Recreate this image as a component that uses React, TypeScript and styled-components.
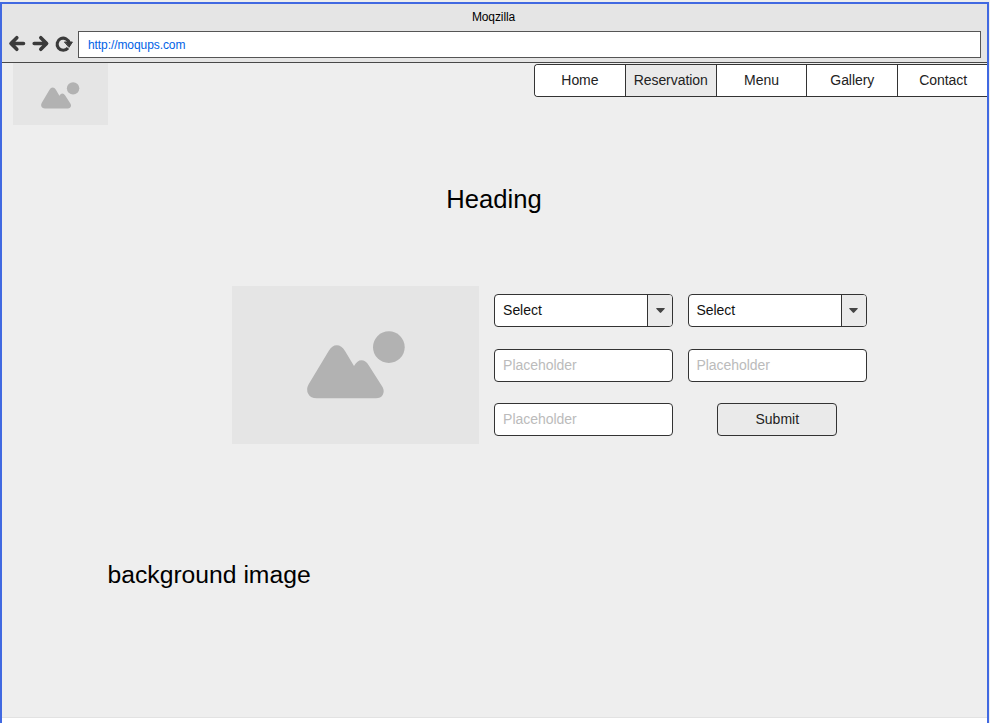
import React from "react";
import styled, { createGlobalStyle } from "styled-components";

const GlobalStyle = createGlobalStyle`
  * { box-sizing: border-box; }
  body {
    margin: 0;
    background: #eeeeee;
    overflow: hidden;
    font-family: "Liberation Sans", Arial, sans-serif;
  }
`;

const ink = "#333333";

const Screen = styled.div`
  width: 990px;
  height: 723px;
  padding: 2px 1px 0 0;
`;

const Window = styled.div`
  height: 721px;
  border: 2px solid #4169e1;
  border-bottom: 0;
  background: #ffffff;
  overflow: hidden;
`;

const Chrome = styled.header`
  height: 59px;
  background: #e5e5e5;
  border-bottom: 1px solid #484848;
`;

const Title = styled.div`
  height: 26px;
  padding-right: 2px;
  line-height: 26px;
  font-size: 12px;
  letter-spacing: -0.1px;
  text-align: center;
  color: #000000;
`;

const AddressRow = styled.div`
  display: flex;
  align-items: center;
  height: 28px;
  padding: 0 6px 0 6px;
`;

const ToolIcons = styled.svg`
  display: block;
  flex: none;
  width: 70px;
  height: 28px;
`;

const Address = styled.div`
  flex: 1;
  height: 27px;
  border: 1px solid #555555;
  background: #ffffff;
  padding-left: 9px;
  line-height: 27px;
  font-size: 12px;
  letter-spacing: -0.08px;
  color: #0062e6;
`;

const Page = styled.main`
  height: 655px;
  background: #eeeeee;
  border-bottom: 1px solid #e2e2e2;
`;

const TopBar = styled.div`
  display: flex;
  justify-content: space-between;
  height: 63px;
  padding-left: 11px;
`;

const Picture = styled.div<{ $w: number; $h: number; $left: number; $top: number }>`
  flex: none;
  width: ${(p) => p.$w}px;
  height: ${(p) => p.$h}px;
  padding: ${(p) => p.$top}px 0 0 ${(p) => p.$left}px;
  background: #e5e5e5;
`;

const PictureSvg = styled.svg`
  display: block;
  overflow: visible;
`;

const Nav = styled.nav`
  display: flex;
  width: 453px;
  height: 33px;
  margin-top: 1px;
  border: 1px solid ${ink};
  border-right: 0;
  border-radius: 4px 0 0 4px;
  background: #ffffff;
  overflow: hidden;
`;

const NavItem = styled.a<{ $active?: boolean }>`
  flex: none;
  width: 90.8px;
  border-right: 1px solid ${ink};
  background: ${(p) => (p.$active ? "#eaeaea" : "#ffffff")};
  line-height: 31px;
  font-size: 14px;
  letter-spacing: -0.06px;
  text-align: center;
  color: #222222;
  &:last-child {
    border-right: 0;
    padding-right: 1px;
  }
`;

const Heading = styled.h1`
  margin: 57px 0 0;
  padding-right: 1px;
  height: 32px;
  line-height: 32px;
  font-size: 25.6px;
  font-weight: 400;
  text-align: center;
  color: #000000;
`;

const Booking = styled.section`
  display: flex;
  gap: 15.4px;
  margin: 71px 0 0 230px;
  height: 158px;
`;

const Form = styled.form`
  display: grid;
  grid-template-columns: 179px 179px;
  grid-auto-rows: 33px;
  column-gap: 14.4px;
  row-gap: 21.5px;
  padding-top: 8px;
`;

const Field = styled.div`
  display: flex;
  border: 1px solid ${ink};
  border-radius: 4px;
  background: #ffffff;
  overflow: hidden;
`;

const FieldText = styled.span<{ $hint?: boolean }>`
  flex: 1;
  padding-left: 7.7px;
  line-height: 31px;
  font-size: 14px;
  letter-spacing: -0.04px;
  color: ${(p) => (p.$hint ? "#bbbbbb" : "#111111")};
`;

const Toggle = styled.span`
  display: flex;
  align-items: center;
  justify-content: center;
  width: 25px;
  border-left: 1px solid ${ink};
  background: #eaeaea;
`;

const Submit = styled.button`
  justify-self: center;
  width: 120px;
  padding: 0;
  border: 1px solid ${ink};
  border-radius: 4px;
  background: #eaeaea;
  font: 14px "Liberation Sans", Arial, sans-serif;
  line-height: 31px;
  color: #222222;
`;

const Caption = styled.p`
  margin: 116px 0 0 105.5px;
  height: 30px;
  line-height: 30px;
  font-size: 24.7px;
  color: #000000;
`;

function Landscape({ width, height }: { width: number; height: number }) {
  return (
    <PictureSvg width={width} height={height} viewBox="0 0 293 202" preserveAspectRatio="none" fill="#b2b2b2">
      <circle cx="245.5" cy="48.5" r="47.5" />
      <path d="M5 160 L65 60 Q75 43 89 43 Q104 43 114 60 L141 105 Q151 88 163 88 Q176 88 185 103 L227 169 Q233 181 227 192 Q221 202 207 202 H29 Q11 202 4 189 Q-4 176 5 160Z" />
    </PictureSvg>
  );
}

function Select() {
  return (
    <Field>
      <FieldText>Select</FieldText>
      <Toggle>
        <svg width="9" height="5" viewBox="0 0 9 5">
          <path d="M.5 0H8.5Q9 .5 8.5 1L5.2 4.6Q4.5 5.2 3.8 4.6L.5 1Q0 .5.5 0Z" fill="#444444" />
        </svg>
      </Toggle>
    </Field>
  );
}

function Placeholder() {
  return (
    <Field>
      <FieldText $hint>Placeholder</FieldText>
    </Field>
  );
}

const links = ["Home", "Reservation", "Menu", "Gallery", "Contact"];

export default function App() {
  return (
    <>
      <GlobalStyle />
      <Screen>
        <Window>
          <Chrome>
            <Title>Moqzilla</Title>
            <AddressRow>
              <ToolIcons viewBox="0 0 70 28" fill="none" stroke="#3b3b3b" strokeWidth="3.6" strokeLinecap="round" strokeLinejoin="round">
                <path d="M3.5 13.5H15.5M8.8 7.7L3 13.5L8.8 19.3" />
                <path d="M26.2 13.5H38.5M32.8 7.7L38.6 13.5L32.8 19.3" />
                <path d="M60 18A6.1 6.1 0 1 1 61.2 13" strokeWidth="3.1" strokeLinecap="butt" />
                <path d="M56.8 12H64.4L61.2 17Z" fill="#3b3b3b" strokeWidth="1" />
              </ToolIcons>
              <Address>http://moqups.com</Address>
            </AddressRow>
          </Chrome>
          <Page>
            <TopBar>
              <Picture $w={95} $h={62} $left={28} $top={18.5}>
                <Landscape width={38.3} height={26.4} />
              </Picture>
              <Nav>
                {links.map((name) => (
                  <NavItem key={name} $active={name === "Reservation"}>
                    {name}
                  </NavItem>
                ))}
              </Nav>
            </TopBar>
            <Heading>Heading</Heading>
            <Booking>
              <Picture $w={247} $h={158} $left={74.7} $top={44.7}>
                <Landscape width={97.7} height={67.3} />
              </Picture>
              <Form>
                <Select />
                <Select />
                <Placeholder />
                <Placeholder />
                <Placeholder />
                <Submit type="button">Submit</Submit>
              </Form>
            </Booking>
            <Caption>background image</Caption>
          </Page>
        </Window>
      </Screen>
    </>
  );
}
